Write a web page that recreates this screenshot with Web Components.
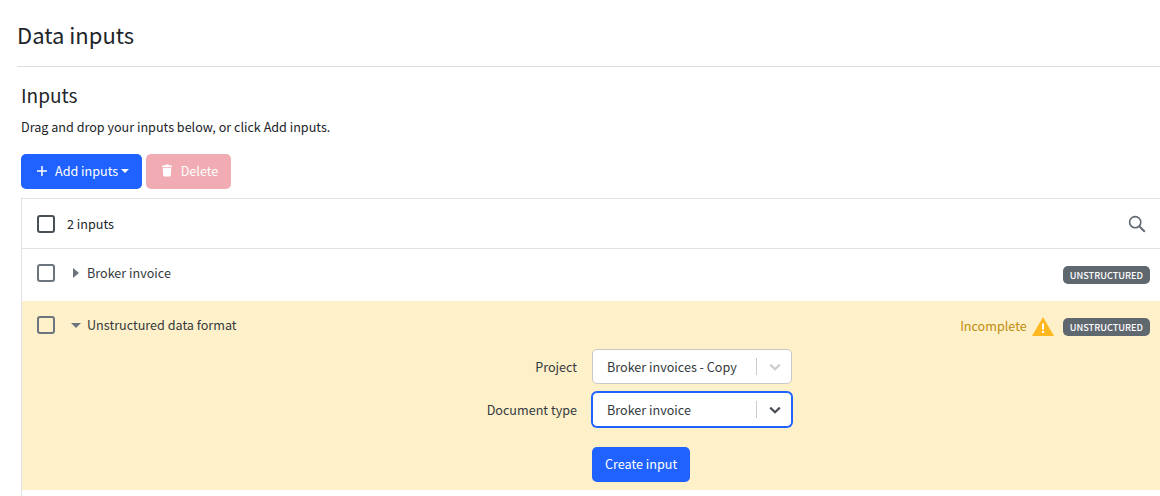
<!DOCTYPE html>
<html>

<head>
  <meta charset="UTF-8">
  <style>
    html, body {
      margin: 0;
      height: 100%;
      overflow: hidden;
      background: #fff;
    }

    body {
      font-family: "Noto Sans CJK JP", "Noto Sans", sans-serif;
      color: #212529;
    }
  </style>
</head>

<body>
  <template id="ui-button-template">
    <style>
      :host {
        display: inline-flex;
      }

      button {
        display: flex;
        align-items: center;
        height: 35px;
        padding: 0 13px 2px;
        border: none;
        border-radius: 5px;
        background: #1f62ff;
        color: #fff;
        font: 12.6px/20px "Noto Sans CJK JP", sans-serif;
        white-space: nowrap;
      }

      :host([disabled]) button {
        background: #f0acb2;
      }
    </style>
    <button><slot></slot></button>
  </template>

  <template id="ui-check-template">
    <style>
      :host {
        display: block;
        width: 18px;
        height: 18px;
        box-sizing: border-box;
        border: 2px solid #6c757d;
        border-radius: 3px;
      }

      :host([dark]) {
        border-color: #495057;
      }
    </style>
  </template>

  <template id="ui-badge-template">
    <style>
      :host {
        display: block;
        height: 18px;
        margin-top: 4px;
        padding: 0 7px;
        border-radius: 5px;
        background: #5f676f;
        color: #fff;
        font: 500 9.2px/18px "Noto Sans CJK JP", sans-serif;
      }
    </style>
    <slot></slot>
  </template>

  <template id="ui-select-template">
    <style>
      :host {
        display: flex;
        align-items: center;
        box-sizing: border-box;
        width: 200px;
        height: 35px;
        border: 1px solid #c8c8c8;
        border-radius: 5px;
        background: #fff;
        color: #343a40;
        font: 12.6px/20px "Noto Sans CJK JP", sans-serif;
      }

      :host([focused]) {
        border-color: #1f62ff;
        box-shadow: 0 0 0 1px #1f62ff;
      }

      .value {
        flex: 1;
        padding-left: 14px;
      }

      .sep {
        width: 1px;
        height: 17px;
        background: #ccc;
      }

      .arrow {
        display: flex;
        justify-content: center;
        align-items: center;
        width: 33px;
        padding-left: 1px;
        color: #ccc;
      }

      :host([focused]) .arrow {
        color: #4a4f55;
      }
    </style>
    <span class="value"><slot></slot></span>
    <span class="sep"></span>
    <span class="arrow">
      <svg width="12" height="8" viewBox="0 0 12 8"><path d="M1.2 1.6 6 6.2l4.8-4.6" fill="none" stroke="currentColor" stroke-width="2.2"/></svg>
    </span>
  </template>

  <template id="input-row-template">
    <style>
      :host {
        display: block;
        border-top: 1px solid #dee2e6;
        padding-bottom: 4px;
      }

      :host([open]) {
        border-top: none;
        padding-bottom: 0;
        background: #fef0c8;
      }

      .head {
        display: flex;
        align-items: center;
        height: 48px;
        padding: 0 10px 0 15px;
        font-size: 12.6px;
        line-height: 20px;
        color: #343a40;
      }

      .caret {
        display: flex;
        justify-content: center;
        width: 12px;
        margin: 0 5px 0 15px;
      }

      .label {
        flex: 1;
      }

      .extra {
        display: flex;
        align-items: center;
      }
    </style>
    <div class="head">
      <ui-check></ui-check>
      <span class="caret"><slot name="caret"></slot></span>
      <span class="label"><slot name="label"></slot></span>
      <span class="extra"><slot name="extra"></slot></span>
    </div>
    <slot></slot>
  </template>

  <template id="inputs-panel-template">
    <style>
      :host {
        display: block;
        margin-top: 9px;
        padding-bottom: 20px;
        border-top: 1px solid #dee2e6;
        border-left: 1px solid #dee2e6;
      }

      .top {
        display: flex;
        align-items: center;
        height: 49px;
        padding: 0 14px 0 15px;
        font-size: 12.6px;
        line-height: 20px;
        color: #212529;
      }

      ui-check {
        margin-right: 12px;
      }

      .count {
        flex: 1;
      }

      svg {
        display: block;
      }
    </style>
    <div class="top">
      <ui-check dark></ui-check>
      <span class="count"><slot name="count"></slot></span>
      <svg width="18" height="18" viewBox="0 0 18 18"><circle cx="7.2" cy="7.2" r="5.6" fill="none" stroke="#5f676f" stroke-width="1.6"/><path d="m11.4 11.4 5.400 5.400" stroke="#5f676f" stroke-width="2"/></svg>
    </div>
    <slot></slot>
  </template>

  <template id="input-form-template">
    <style>
      :host {
        display: grid;
        grid-template-columns: 555px 200px;
        column-gap: 15px;
        row-gap: 8px;
        align-items: center;
        align-content: start;
        height: 141px;
        font-size: 12.6px;
        line-height: 20px;
        color: #343a40;
      }
    </style>
    <slot></slot>
  </template>

  <data-inputs-page>
    <span slot="title">Data inputs</span>
    <span slot="section">Inputs</span>
    <span slot="hint">Drag and drop your inputs below, or click Add inputs.</span>

    <ui-button slot="actions">
      <svg style="margin:0 8px 0 3px" width="10" height="10" viewBox="0 0 10 10"><path d="M5 0v10M0 5h10" stroke="#fff" stroke-width="1.5"/></svg>Add inputs<svg style="margin-left:3px" width="8" height="4" viewBox="0 0 8 4"><path d="M0 0h8L4 4z" fill="#fff"/></svg>
    </ui-button>
    <ui-button slot="actions" disabled>
      <svg style="margin:0 8.5px 0 3px" width="10" height="13" viewBox="0 0 11 13"><path d="M3.6 0h3.800l.5 1H11v1.600H0V1h3.100zM.8 3.400h9.400l-.6 8.600c0 .6-.5 1-1 1H2.400c-.5 0-1-.4-1-1z" fill="#fff"/></svg>Delete
    </ui-button>

    <inputs-panel slot="panel">
      <span slot="count">2 inputs</span>
      <input-row>
        <svg slot="caret" width="6" height="10" viewBox="0 0 6 10"><path d="M0 0l6 5-6 5z" fill="#6c757d"/></svg>
        <span slot="label">Broker invoice</span>
        <ui-badge slot="extra">UNSTRUCTURED</ui-badge>
      </input-row>
      <input-row open>
        <svg slot="caret" width="10" height="5" viewBox="0 0 10 5"><path d="M0 0h10L5 5z" fill="#6c757d"/></svg>
        <span slot="label">Unstructured data format</span>
        <span slot="extra" style="color:#bf8c10;margin:2px 5px 0 0">Incomplete</span>
        <svg slot="extra" style="margin:3px 9px 0 0" width="22" height="19" viewBox="0 0 22 19"><path d="M11 0 22 19H0z" fill="#ffb81f"/><path d="M10 6.500h2v6h-2zM10 14h2v2h-2z" fill="#fff"/></svg>
        <ui-badge slot="extra">UNSTRUCTURED</ui-badge>
        <input-form>
          <span style="text-align:right">Project</span>
          <ui-select>Broker invoices - Copy</ui-select>
          <span style="text-align:right">Document type</span>
          <ui-select focused>Broker invoice</ui-select>
          <span></span>
          <ui-button style="margin-top:12px"><span>Create input</span></ui-button>
        </input-form>
      </input-row>
    </inputs-panel>
  </data-inputs-page>

  <template id="data-inputs-page-template">
    <style>
      :host {
        display: block;
        padding-left: 17px;
      }

      header {
        height: 67px;
        box-sizing: border-box;
        padding-top: 18px;
        border-bottom: 1px solid #d8dee4;
        font-size: 22px;
        line-height: 32px;
        color: #212529;
      }

      .body {
        padding-left: 4px;
      }

      h2 {
        margin: 16px 0 0;
        font-size: 19px;
        font-weight: 400;
        line-height: 24px;
      }

      p {
        margin: 10px 0 0;
        font-size: 12.6px;
        line-height: 20px;
      }

      .actions {
        display: flex;
        gap: 4px;
        margin-top: 17px;
      }
    </style>
    <header><slot name="title"></slot></header>
    <div class="body">
      <h2><slot name="section"></slot></h2>
      <p><slot name="hint"></slot></p>
      <div class="actions"><slot name="actions"></slot></div>
      <slot name="panel"></slot>
    </div>
  </template>

  <script>
    // every element just stamps its own template into an open shadow root
    function define(name) {
      customElements.define(name, class extends HTMLElement {
        constructor() {
          super();
          const template = document.getElementById(name + '-template');
          this.attachShadow({ mode: 'open' }).appendChild(template.content.cloneNode(true));
        }
      });
    }

    ['ui-button', 'ui-check', 'ui-badge', 'ui-select', 'input-row', 'inputs-panel', 'input-form', 'data-inputs-page'].forEach(define);
  </script>
</body>

</html>
